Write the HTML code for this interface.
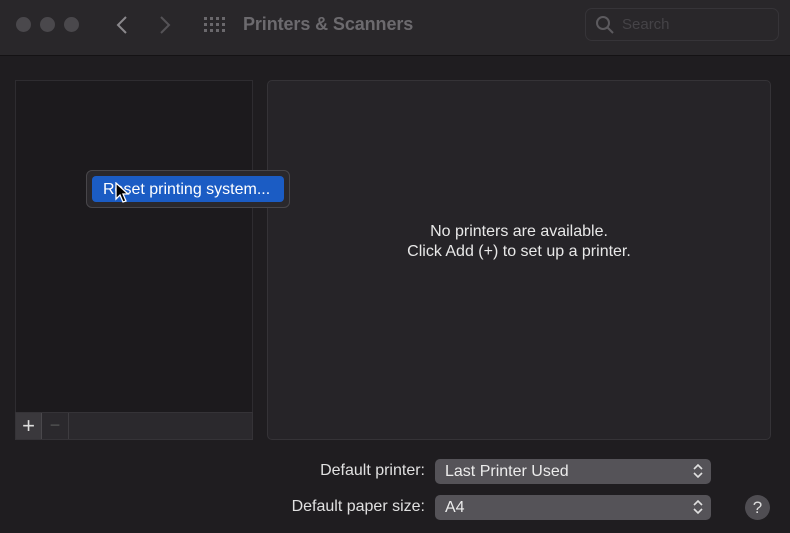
<!DOCTYPE html><html><head><style>
*{box-sizing:border-box;margin:0;padding:0}
body{width:790px;height:533px;background:#1f1d20;font-family:"Liberation Sans",sans-serif;position:relative;overflow:hidden;color:#e6e6e6}
.abs{position:absolute}
.tb{left:0;top:0;width:790px;height:56px;background:#29272a;border-bottom:1px solid #141214}
.dot{width:15px;height:15px;border-radius:50%;background:#4a484c;top:17px}
.title{left:243px;top:14px;font-size:18px;font-weight:bold;color:#6c6a6e;letter-spacing:-0.1px}
.search{left:585px;top:8px;width:194px;height:33px;border:1px solid #363438;border-radius:7px}
.list{left:15px;top:80px;width:238px;height:360px;background:#1c1a1d;border:1px solid #2e2c30}
.bar{left:15px;top:412px;width:238px;height:28px;background:#2b292d;border:1px solid #353337}
.panel{left:267px;top:80px;width:504px;height:360px;background:#262428;border:1px solid #353337;border-radius:5px}
.msg{left:267px;top:222px;width:504px;text-align:center;font-size:16px;line-height:20px;color:#e8e8e8}
.menu{left:86px;top:170px;width:204px;height:38px;background:#2a282c;border:1px solid #48464a;border-radius:6px}
.item{left:92px;top:176px;width:192px;height:26px;background:#1b5cc4;border-radius:4px;color:#fff;font-size:16px;line-height:28px;padding-left:11px}
.lbl{font-size:16px;color:#e0e0e0;text-align:right;width:200px}
.pop{left:435px;width:276px;height:25px;background:#555358;border-radius:5px;font-size:16px;line-height:25px;padding-left:10px;color:#ececec}
</style></head><body>
<div class="abs tb"></div>
<div class="abs dot" style="left:16px"></div><div class="abs dot" style="left:40px"></div><div class="abs dot" style="left:64px"></div>
<svg class="abs" style="left:112px;top:14px" width="20" height="22"><path d="M14 3 L6 11 L14 19" stroke="#8a888c" stroke-width="2" fill="none"/></svg>
<svg class="abs" style="left:155px;top:14px" width="20" height="22"><path d="M6 3 L14 11 L6 19" stroke="#555357" stroke-width="2" fill="none"/></svg>
<svg class="abs" style="left:203px;top:16px" width="22" height="16" fill="#6a686c">
<rect x="1" y="1" width="3" height="3"/><rect x="7" y="1" width="3" height="3"/><rect x="13" y="1" width="3" height="3"/><rect x="19" y="1" width="3" height="3"/>
<rect x="1" y="7" width="3" height="3"/><rect x="7" y="7" width="3" height="3"/><rect x="13" y="7" width="3" height="3"/><rect x="19" y="7" width="3" height="3"/>
<rect x="1" y="13" width="3" height="3"/><rect x="7" y="13" width="3" height="3"/><rect x="13" y="13" width="3" height="3"/><rect x="19" y="13" width="3" height="3"/></svg>
<div class="abs title">Printers &amp; Scanners</div>
<div class="abs search"></div>
<svg class="abs" style="left:595px;top:15px" width="20" height="20"><circle cx="8" cy="8" r="6" stroke="#5c5a5e" stroke-width="2" fill="none"/><path d="M12.5 12.5 L18 18" stroke="#5c5a5e" stroke-width="2"/></svg>
<div class="abs" style="left:622px;top:16px;font-size:15px;color:#454347">Search</div>
<div class="abs list"></div>
<div class="abs bar"></div>
<div class="abs" style="left:16px;top:413px;width:26px;height:26px;background:#3a383c;border-right:1px solid #4a484c;color:#ddd;font-size:22px;line-height:25px;text-align:center">+</div>
<div class="abs" style="left:42px;top:413px;width:27px;height:26px;border-right:1px solid #3e3c40;color:#555;font-size:18px;line-height:24px;text-align:center">−</div>
<div class="abs panel"></div>
<div class="abs msg">No printers are available.<br>Click Add (+) to set up a printer.</div>
<div class="abs menu"></div>
<div class="abs item">Reset printing system...</div>
<svg class="abs" style="left:114px;top:182px" width="16" height="22"><path d="M2 1 L2 17 L6 13 L9 20 L12 19 L9 12 L14 12 Z" fill="#000" stroke="#fff" stroke-width="1.3"/></svg>
<div class="abs lbl" style="left:225px;top:462px">Default printer:</div>
<div class="abs lbl" style="left:225px;top:498px">Default paper size:</div>
<div class="abs pop" style="top:459px">Last Printer Used</div>
<div class="abs pop" style="top:495px">A4</div>
<svg class="abs" style="left:692px;top:462px" width="12" height="18"><path d="M2 7 L6 3 L10 7 M2 11 L6 15 L10 11" stroke="#e0e0e0" stroke-width="1.6" fill="none"/></svg>
<svg class="abs" style="left:692px;top:498px" width="12" height="18"><path d="M2 7 L6 3 L10 7 M2 11 L6 15 L10 11" stroke="#e0e0e0" stroke-width="1.6" fill="none"/></svg>
<div class="abs" style="left:745px;top:495px;width:25px;height:25px;border-radius:50%;background:#4f4d52;color:#ddd;font-size:17px;line-height:25px;text-align:center">?</div>
</body></html>
